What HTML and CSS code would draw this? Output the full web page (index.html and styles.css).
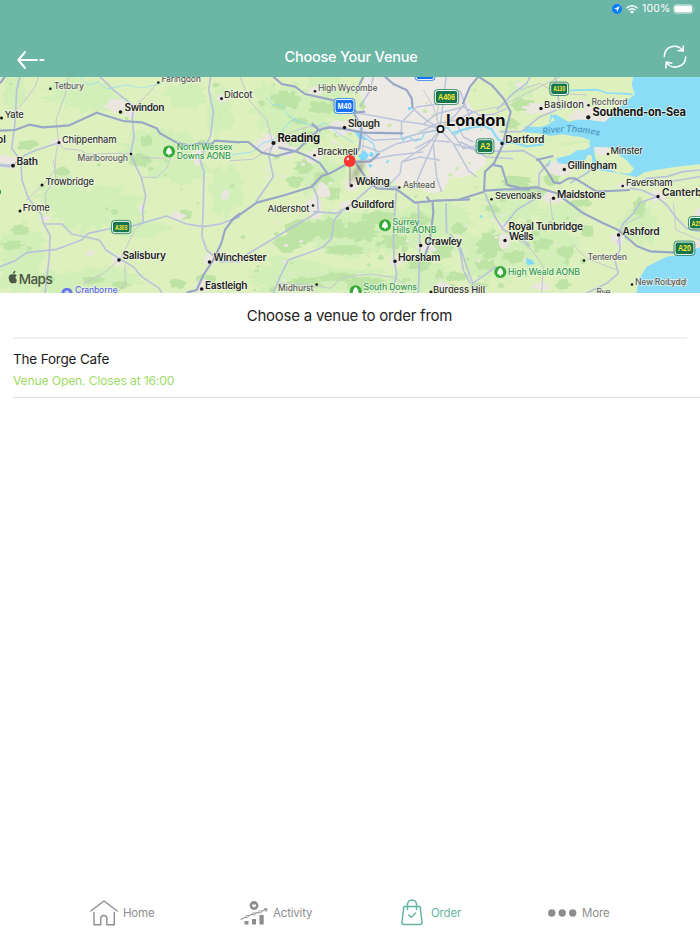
FILE: index.html
```html
<!DOCTYPE html>
<html lang="en">
<head>
<meta charset="utf-8">
<title>Choose Your Venue</title>
<link rel="stylesheet" href="styles.css">
</head>
<body>
<div class="app">
  <header class="header">
    <div class="status">
      <svg class="status-loc" viewBox="0 0 10 10"><circle cx="5" cy="5" r="5" fill="#087cff"/><path d="M7.8 2.2 2 4.8l2.7.5.5 2.7z" fill="#fff"/></svg>
      <svg class="status-wifi" viewBox="0 0 12 9"><g fill="none" stroke="#fff" stroke-width="1.5"><path d="M.6 3.2Q6-1.6 11.4 3.2M2.6 5.3Q6 2.3 9.4 5.3"/></g><path d="M4 6.7Q6 5 8 6.7L6 8.8z" fill="#fff"/></svg>
      <span class="status-text">100%</span>
      <svg class="status-batt" viewBox="0 0 22 10"><rect x=".5" y=".5" width="19.5" height="9" rx="2.8" fill="none" stroke="#fff" stroke-opacity=".5" stroke-width=".8"/><rect x="1.4" y="1.5" width="17.6" height="7" rx="1.8" fill="#fff"/><path d="M20.8 3.5q1.2 1.5 0 3z" fill="#fff" opacity=".5"/></svg>
    </div>
    <div class="nav">
      <svg class="back" viewBox="0 0 28 18"><path d="M8 1 1.3 9 8 17M1.3 9H20M23.3 9h3.2" fill="none" stroke="#fff" stroke-width="2" stroke-linecap="round" stroke-linejoin="round"/></svg>
      <h1 class="title">Choose Your Venue</h1>
      <svg class="refresh" viewBox="0 0 24 24"><g fill="none" stroke="#fff" stroke-width="1.5" stroke-linecap="round" stroke-linejoin="round"><path d="M1.300 11.500C1.500 1.500 13.500-2.500 20 5.700M20.300.9v5.200l-5.300-.6M22.700 12c-.2 9.800-13 13.800-19.200 5.600M2.800 23l.5-6 5.500 1.200"/></g></svg>
    </div>
  </header>

  <svg class="map" viewBox="0 77 700 216">
    <defs>
      <g id="tree"><circle r="6" fill="#34a936"/><path d="M0-4.200C2.600-2.500 3.800 2 2.200 2.500H.6v1.400H-.6V2.500h-1.600C-3.800 2-2.600-2.500 0-4.200z" fill="#fff"/></g>
      <filter id="soft" x="-50%" y="-50%" width="200%" height="200%"><feGaussianBlur stdDeviation="2.500"/></filter>
    </defs>
    <rect y="77" width="700" height="216" fill="#dff0bf"/>
    <g id="meadow" fill="#d2eeb9"></g>
    <g id="wood" fill="#bde3a5"></g>
    <g id="town" fill="#ebe7e0"></g>

    <!-- London -->
    <g transform="translate(340 77) scale(.33333)">
      <path d="M50 110 80 90 60 50 75 0H405L380 70 400 100 440 112 480 130 475 160 495 190 470 215 430 225 440 260 400 290 370 300 330 300 310 340 280 350 250 340 230 310 180 330 150 310 90 290 60 240 62 200 40 160z" fill="#edeae5"/>
    </g>
    <g id="park" fill="#cbe9b0"></g>

    <!-- Thames estuary and south coast -->
    <g transform="translate(530 77) scale(.33333)">
      <path d="M310 0 305 25 315 52 285 75 270 90 240 120 225 135 170 128 140 128 115 135 100 125 75 112 65 118 75 130 50 145 30 150 -15 148 -20 165 38 170 60 177 100 172 130 178 155 180 178 190 180 210 165 218 140 220 120 235 95 240 78 245 85 258 110 262 140 255 165 250 172 235 185 235 188 262 210 280 260 288 320 300 345 285 400 275 450 268 510 262V0z" fill="#8bdcf7"/>
      <path d="M192 210 240 212 262 232 290 250 312 275 300 290 262 288 235 275 205 260 195 240z" fill="#dff0bf"/>
      <path d="M192 210 235 212 240 228 222 236 200 232z" fill="#ebe8e1"/>
      <path d="M120 40 200 38 230 48 280 50 308 52M172 262 180 280 168 290M60 250 55 268M65 112 60 135" fill="none" stroke="#8bdcf7" stroke-width="5"/>
      <path d="M90 203 180 192M-10 186 40 190 70 184" fill="none" stroke="#d2eeb9" stroke-width="7"/>
    </g>
    <path d="M700 246.700l-13.300 6.600-20 3.400-20 10-8.400 13.300-1.600 13H700z" fill="#8bdcf7"/>
    <path d="M700 240v7l-13 5-4-2 8-6z" fill="#ebe7e0"/>
    <g fill="none" stroke="#8bdcf7" stroke-linejoin="round">
      <g transform="translate(340 77) scale(.33333)">
        <path d="M45 122 60 150 62 172 100 200 112 240M180 165 188 190 205 178 225 192 245 186 255 166 285 162 300 153 325 153 342 176 360 162" stroke-width="4"/>
        <path d="M340 168 362 160 400 150 430 147 455 157 472 184 490 200 520 196 560 208 610 202" stroke-width="7"/>
      </g>
      <path d="M230 155l22-3 11-9 12-4 10-12 8-8 22 8 10-4 13 10 16 10" stroke-width="1" opacity=".8"/>
      <path d="M80 77l8 8 10-3 9 7 20-4 15 3 20-5M266 97l6 7 11 2 4 8 13 9" stroke-width=".9" opacity=".7"/>
    </g>
    <g fill="#7fdaf8"><path d="M354 131l7 2 6 7-8-1zM358 156l6-6 5 5-3 5-5 0zM370 152l4 1-1 4-4-1zM368 164l5 1-3 3zM386 161l4-1-3 4zM408 107h3v3h-3zM480 215l3 1-2 3zM526 258l6 2 3 4-8 1z"/></g>

    <!-- Minor roads -->
    <g fill="none" stroke="#c6c7cf" stroke-width="3" stroke-linejoin="round">
      <g transform="translate(0 70) scale(.33333)">
        <path d="M116 20 106 50 70 98 48 118M205 20 195 75 168 150 176 217 168 250 165 300 130 345 76 392M473 38 436 80 400 112M178 220 190 236 240 240 260 252 392 250M427 322H470L500 295 512 262M375 585 376 640 350 670M430 458 405 478 382 525 360 568 310 610 250 640M424 264H500M160 270 168 325 135 372 140 430"/>
      </g>
      <g transform="translate(230 70) scale(.33333)">
        <path d="M30 20 60 95 110 150 128 218M125 222 190 184 235 170 345 172M0 272 70 268 125 230M140 640 240 645 300 655 340 622 420 612 490 622 540 650M405 180 395 250M630 60 620 150M580 60 610 110 632 178"/>
      </g>
      <g transform="translate(460 70) scale(.33333)">
        <path d="M0 165 40 125 120 110 200 70 300 20M270 386 278 450 240 480M640 400 648 480 720 510M340 525 380 565 470 600M175 510 215 540 250 590 245 670M180 60 240 40 290 70 380 75M540 440 500 460 470 520"/>
      </g>
    </g>

    <!-- A roads -->
    <g fill="none" stroke="#b8c3da" stroke-width="5" stroke-linejoin="round">
      <g transform="translate(0 70) scale(.33333)">
        <path d="M300 20 340 60 385 95 400 108 397 150 402 200 392 250 408 290 424 322 437 378 428 420 430 460M60 20 50 60 45 160 35 235 62 272 66 330 85 385 125 435 130 460 150 495 148 560 135 670M0 283 38 287 75 255 110 240 178 218M130 462H186L215 492 298 510 318 540 358 566 400 590 425 620 478 655 486 672M0 590 45 572 80 548 170 538 245 510 265 490 340 474 400 467 500 438 560 462 610 470 660 462 720 440M632 20 626 60 640 125 632 195 600 270 612 305 610 400 606 500 620 540 660 575H720M0 288 30 290"/>
      </g>
      <g transform="translate(230 70) scale(.33333)">
        <path d="M130 222 116 255 130 320 78 395M245 340 262 380 265 425 140 500 40 560M250 425 320 430 353 412 430 345 505 352M335 425 312 450 305 505 280 530 245 545 175 570 150 620 130 670M500 355 490 480 492 570 500 610 488 670M565 400 570 530 565 670M648 400 650 490M660 490 690 540 700 600 720 640"/>
      </g>
      <g transform="translate(340 77) scale(.33333)" stroke="#bcc5db" stroke-width="4.500">
        <path d="M50 107 185 132 250 142 300 155M185 132 184 168M60 160 100 190 180 185 230 172 300 157M65 205 120 225 170 200 240 185M300 160 260 205 185 255 180 290 150 320M300 160 280 200 240 290 225 330M280 200 290 300 305 345M300 157 340 200 395 215 440 240 520 245M310 150 350 110 375 80M300 150 308 90 318 0M215 92 260 130 300 155M190 130 230 90 300 80M250 142 290 110 370 90 420 115 460 112 500 95M240 165 290 140 345 130 400 105M340 200 385 280 410 300M335 165 370 215 440 200M225 215 270 190 330 195M185 255 240 240 300 250M80 250 160 235 250 225M100 0 90 40 60 90M345 130 370 180 400 195M360 40 385 110 390 150"/>
      </g>
      <g transform="translate(460 70) scale(.33333)">
        <path d="M0 215 50 240 125 245 190 242 235 268M120 185 185 185 240 140 290 120M110 120 160 70 200 40 210 20M285 20 290 45 300 120M75 370 105 440 130 480 180 500 210 530M130 470 170 420 235 380 238 310 265 280M330 340 380 310 410 280M475 495 490 460 520 430 540 398 590 380 620 405 650 445 680 475 720 485M590 380 545 360 510 355M520 350 560 325 620 320 670 305 720 300M560 345 660 330 720 320M478 500 480 540 465 570 475 610 440 640 380 670M0 530 20 590 38 640 110 590M38 640 40 670"/>
      </g>
    </g>

    <!-- Motorways -->
    <g fill="none" stroke="#99a7c7" stroke-width="6.500" stroke-linejoin="round">
      <g transform="translate(0 70) scale(.33333)">
        <path d="M0 182 45 180 88 164 130 172 208 166 290 128 370 153 425 157 470 175 480 190 530 218 565 226 600 220 635 222 645 212 720 217M0 40 15 20M720 430 700 446 675 480 664 520 640 570 610 615 590 660 560 668"/>
      </g>
      <g transform="translate(230 70) scale(.33333)">
        <path d="M0 216H55L95 248 140 258 200 242 265 180 300 172 350 178 400 188 520 190M130 20 155 42 195 50 225 72 325 94 380 125M372 130 395 175 388 235 360 275M145 232 200 245 240 262 270 280 292 310M0 455 80 398 165 375 245 350 275 318 300 310 345 285 365 275M245 160 272 185M365 275 420 275 448 250M375 275 405 320 440 355 500 358 555 398 620 392 720 388M608 395 610 430 598 520 580 570M590 380 600 395M400 20 385 50 378 70M465 20 490 42 530 60 545 85 548 115M375 128 405 125"/>
      </g>
      <g transform="translate(460 70) scale(.33333)">
        <path d="M8 102 30 50 55 20 95 45 130 85 152 125 140 175 128 225 102 280 75 305 72 365 0 388M95 284 125 290 142 345 185 355 230 352 290 370 370 430 430 460 475 480 530 528 570 544 650 548M75 362 135 358 210 358M228 270 280 258M235 268 262 305 282 338 300 340 325 325 345 325 410 365 510 360"/>
      </g>
    </g>

    <!-- Place dots -->
    <g class="dots">
      <circle cx="50.300" cy="88.700" r="1.300"/><circle cx="158.300" cy="82.500" r="1.300"/><circle cx="221.500" cy="98.500" r="1.500"/><circle cx="120.500" cy="112" r="1.800"/><circle cx="1.500" cy="118" r="1.500"/><circle cx="59" cy="142.500" r="1.500"/><circle cx="131" cy="154" r="1.300"/><circle cx="13" cy="165.700" r="1.900"/><circle cx="42" cy="185" r="1.500"/><circle cx="20" cy="211" r="1.500"/><circle cx="119" cy="260" r="1.800"/><circle cx="209.500" cy="262" r="1.800"/><circle cx="201.700" cy="289" r="1.800"/>
      <circle cx="315" cy="91.300" r="1.300"/><circle cx="344.500" cy="127.500" r="1.700"/><circle cx="273.500" cy="143" r="2.100"/><circle cx="314.500" cy="155.300" r="1.300"/><circle cx="351.300" cy="185.500" r="1.700"/><circle cx="399.300" cy="187.500" r="1.300"/><circle cx="313" cy="205.500" r="1.300"/><circle cx="347.500" cy="208.500" r="1.700"/><circle cx="420.700" cy="245.500" r="1.700"/><circle cx="395" cy="261.300" r="1.700"/><circle cx="316.700" cy="284.500" r="1.300"/><circle cx="431" cy="292" r="1.500"/>
      <circle cx="541" cy="108.500" r="1.700"/><circle cx="588.500" cy="105.300" r="1.300"/><circle cx="588.300" cy="117.300" r="2.100"/><circle cx="502" cy="143.500" r="1.700"/><circle cx="608" cy="154" r="1.300"/><circle cx="564.300" cy="169.500" r="1.700"/><circle cx="622.700" cy="186" r="1.300"/><circle cx="658" cy="196.500" r="1.700"/><circle cx="491.500" cy="199.300" r="1.300"/><circle cx="553.500" cy="198.300" r="1.700"/><circle cx="505" cy="240.500" r="1.700"/><circle cx="618.500" cy="235" r="1.700"/><circle cx="584" cy="260.500" r="1.300"/><circle cx="632" cy="284.500" r="1.300"/>
      <circle cx="440.500" cy="129" r="3.100" fill="#fff" stroke="#111" stroke-width="1.700"/>
    </g>

    <!-- Place names -->
    <g class="labels">
      <g class="small">
        <text x="54" y="89" textLength="30">Tetbury</text><text x="161.500" y="82.300" textLength="39.500">Faringdon</text><text x="77.500" y="160.800" textLength="50.500">Marlborough</text>
        <text x="318" y="91.200" textLength="59.500">High Wycombe</text><text x="403" y="187.500" textLength="32">Ashtead</text><text x="278" y="291" textLength="35.500">Midhurst</text>
        <text x="591.500" y="105" textLength="36">Rochford</text><text x="587.500" y="260" textLength="39.500">Tenterden</text><text x="635" y="284.500" textLength="52">New Romney</text><text x="667" y="285" textLength="19">Lydd</text><text x="596.500" y="295" textLength="14">Rye</text>
      </g>
      <g class="mid">
        <text x="4.800" y="117.800" textLength="19">Yate</text><text x="62" y="142.500" textLength="54.500">Chippenham</text><text x="45.500" y="185" textLength="48.500">Trowbridge</text><text x="22.800" y="211" textLength="27">Frome</text><text x="224" y="97.800" textLength="28.500">Didcot</text>
        <text x="317.500" y="155" textLength="40">Bracknell</text><text x="267.500" y="212" textLength="42">Aldershot</text><text x="433" y="293" textLength="52">Burgess Hill</text>
        <text x="544" y="107.500" textLength="40">Basildon</text><text x="610.500" y="153.500" textLength="32.500">Minster</text><text x="626" y="185.500" textLength="46.500">Faversham</text><text x="495" y="199" textLength="46.500">Sevenoaks</text>
      </g>
      <g class="big">
        <text x="124.500" y="111" textLength="40">Swindon</text><text x="16.500" y="165" textLength="21.500">Bath</text><text x="122.500" y="259" textLength="43.500">Salisbury</text><text x="213.500" y="261.300" textLength="53">Winchester</text><text x="205" y="288.500" textLength="42.500">Eastleigh</text><text x="-3" y="142.500">ol</text>
        <text x="348" y="127" textLength="32">Slough</text><text x="355.300" y="185" textLength="34.500">Woking</text><text x="351" y="208" textLength="43">Guildford</text><text x="424.500" y="244.800" textLength="37.500">Crawley</text><text x="398" y="260.500" textLength="42.500">Horsham</text>
        <text x="505.300" y="143" textLength="39">Dartford</text><text x="567.500" y="169" textLength="49.500">Gillingham</text><text x="557" y="198" textLength="48.500">Maidstone</text><text x="662" y="196">Canterbury</text><text x="508.500" y="229.700" textLength="74.500">Royal Tunbridge</text><text x="509" y="240" textLength="24.500">Wells</text><text x="622.500" y="234.700" textLength="37">Ashford</text>
      </g>
      <text class="city" x="277.500" y="142.300" textLength="42.500">Reading</text>
      <text class="city" x="592.500" y="115.700" textLength="93.500">Southend-on-Sea</text>
      <text class="capital" x="446" y="126" textLength="59.500">London</text>
      <g class="nature">
        <text x="176.700" y="150.300" textLength="56">North Wessex</text><text x="176.700" y="159" textLength="54">Downs AONB</text>
        <text x="392.500" y="224.500" textLength="27">Surrey</text><text x="392.500" y="233.300" textLength="44">Hills AONB</text>
        <text x="363.500" y="290" textLength="53.500">South Downs</text><text x="363.500" y="299" textLength="54">National Park</text><text x="508" y="275.300" textLength="72">High Weald AONB</text>
      </g>
      <text class="cranborne" x="75" y="292.500" textLength="42.500">Cranborne</text>
      <path id="river" d="M543 134.500Q575 128 602 137" fill="none"/>
      <text class="river"><textPath href="#river" textLength="57">River Thames</textPath></text>
    </g>
    <use href="#tree" x="169" y="151.500"/><use href="#tree" x="385" y="225.300"/><use href="#tree" x="355.700" y="291.200"/><use href="#tree" x="500.300" y="272"/>
    <circle cx="67" cy="293.500" r="5.700" fill="#6676eb"/><path d="M64 292.500l3-2 3 2z" fill="#fff"/>
    <path d="M0 190v4" stroke="#34a936" stroke-width="2"/>

    <!-- Road shields -->
    <g class="shields">
      <g fill="#16764f" stroke="#fff" stroke-width="1"><rect x="435.300" y="90.500" width="22.500" height="13" rx="2.500"/><rect x="477" y="139.700" width="16" height="13" rx="2.500"/><rect x="550.700" y="83" width="17" height="11.500" rx="2.500"/><rect x="112.500" y="221.300" width="17.500" height="11.500" rx="2.500"/><rect x="675" y="242" width="19" height="12.500" rx="2.500"/><rect x="689.500" y="217.500" width="18" height="11.500" rx="2.500"/></g>
      <g fill="none" stroke="#16764f" stroke-width=".8"><rect x="434.400" y="89.600" width="24.300" height="14.800" rx="3"/><rect x="476.100" y="138.800" width="17.800" height="14.800" rx="3"/><rect x="549.800" y="82.100" width="18.800" height="13.300" rx="3"/><rect x="111.600" y="220.400" width="19.300" height="13.300" rx="3"/><rect x="674.100" y="241.100" width="20.800" height="14.300" rx="3"/><rect x="688.600" y="216.600" width="20" height="13.300" rx="3"/></g>
      <g fill="#1671f2" stroke="#fff" stroke-width="1"><rect x="335" y="99.500" width="19" height="13" rx="2.500"/><rect x="416" y="66" width="18" height="13.500" rx="2.500"/></g>
      <g fill="none" stroke="#1671f2" stroke-width=".8"><rect x="334.100" y="98.600" width="20.800" height="14.800" rx="3"/><rect x="415.100" y="66" width="19.800" height="14.400" rx="3"/></g>
      <g class="shield-text"><text x="446.500" y="100.200" textLength="17" lengthAdjust="spacingAndGlyphs">A406</text><text x="485" y="149.300" textLength="10" lengthAdjust="spacingAndGlyphs">A2</text><text class="tiny" x="559.200" y="91.400" textLength="12" lengthAdjust="spacingAndGlyphs">A130</text><text class="tiny" x="121.200" y="229.700" textLength="12.500" lengthAdjust="spacingAndGlyphs">A303</text><text x="684.500" y="251.300" textLength="13" lengthAdjust="spacingAndGlyphs">A20</text><text class="tiny" x="698" y="225.700" textLength="13" lengthAdjust="spacingAndGlyphs">A259</text><text class="white" x="344.500" y="109.200" textLength="14" lengthAdjust="spacingAndGlyphs">M40</text></g>
    </g>

    <!-- Venue pin -->
    <path d="M352 183 365 164l-5-3-8 14z" fill="#555" opacity=".45" filter="url(#soft)"/>
    <path d="M350 165v20" stroke="#a9a2a0" stroke-width="1.500"/>
    <circle cx="349.700" cy="161" r="5.900" fill="#fb3530"/><circle cx="347.900" cy="158.900" r="1.300" fill="#fff" opacity=".85"/>

    <!-- Map attribution -->
    <g fill="#4c5844"><path d="M16.800 276.300c-1.500-.9-1.700-3 0-4.100-1-1.300-2.200-1-3.300-.6-1.200-.5-3.700-.3-4 2.500-.3 3 1.800 5.900 3.200 5.500l1-.4 1.200.4c1.100.1 1.900-1.800 1.900-3.300zM13.300 271c-.1-1.300.8-2.600 2.200-2.800.2 1.300-.8 2.700-2.200 2.800z" transform="translate(-1.700 -24.200) scale(1.100)"/><text class="brand" x="18.700" y="283.700" textLength="34">Maps</text></g>
  </svg>

  <main class="content">
    <h2 class="prompt">Choose a venue to order from</h2>
    <div class="venue">
      <div class="venue-name">The Forge Cafe</div>
      <div class="venue-state">Venue Open. Closes at 16:00</div>
    </div>
  </main>

  <nav class="tabs">
    <div class="tab home"><svg width="28" height="26" viewBox="0 0 28 26"><path d="M.8 11 14 1l13.200 10M4 12.500v12.300h6.800v-6.300q0-3 3-3t3 3v6.300h7.500V12.500" fill="none" stroke="#8d8d8d" stroke-width="1.400" stroke-linecap="round" stroke-linejoin="round"/></svg><span class="tab-label">Home</span></div>
    <div class="tab activity"><svg width="28" height="24" viewBox="0 0 28 24"><g fill="#8d8d8d"><path d="M4.500 20h4v3.600h-4zM12 18h4v5.600h-4zM19.500 14h4.200v9.600h-4.200z"/><circle cx="14" cy="4.500" r="4.400"/></g><path d="M14 6.800 11.900 4.700q-.1-1.500 1.100-1.400l1 .7 1-.7q1.200-.1 1.100 1.400z" fill="#fff"/><path d="M.7 18.500 7 15.600l7-3 6.500-1.800L26.700 8m-2.900-.2 3.200.1-1.300 2.900" fill="none" stroke="#8d8d8d" stroke-width="1.100"/><g fill="#fff" stroke="#8d8d8d" stroke-width=".8"><circle cx="7" cy="15.600" r="1.200"/><circle cx="14" cy="12.900" r="1.200"/><circle cx="20.500" cy="10.800" r="1.200"/></g></svg><span class="tab-label">Activity</span></div>
    <div class="tab order"><svg width="22" height="27" viewBox="0 0 22 27"><path d="M2.900 7.500h16.200L21 23q0 2.600-2.500 2.600h-15Q.8 25.600 1 23zM6.500 10.500V5.300q.3-4 4.500-4.300 4.300.3 4.500 4.300v5.200M7.800 16l2.500 2.300L14.600 14" fill="none" stroke="#64b6a2" stroke-width="1.500" stroke-linecap="round" stroke-linejoin="round"/></svg><span class="tab-label">Order</span></div>
    <div class="tab more"><svg width="29" height="8" viewBox="0 0 29 8"><g fill="#8d8d8d"><circle cx="3.800" cy="4" r="3.700"/><circle cx="14.200" cy="4" r="3.700"/><circle cx="24.700" cy="4" r="3.700"/></g></svg><span class="tab-label">More</span></div>
  </nav>
</div>
<script src="map.js"></script>
</body>
</html>
```
FILE: styles.css
```css
* { box-sizing: border-box; }
body { margin: 0; background: #fff; font-family: Inter, "Liberation Sans", sans-serif; }
.app { width: 700px; height: 934px; display: flex; flex-direction: column; overflow: hidden; }
.header { height: 77px; background: #6cb6a6; color: #fff; flex: none; }
.status { height: 18px; padding: 0 6px 0 0; display: flex; align-items: center; justify-content: flex-end; }
.status-loc { width: 10px; height: 10px; margin-right: 4px; }
.status-wifi { width: 12px; height: 9px; margin-right: 4px; }
.status-text { font-size: 10.5px; line-height: 18px; width: 28px; white-space: nowrap; margin-right: 3px; letter-spacing: .15px; }
.status-batt { width: 22px; height: 10px; margin-right: -1px; }
.nav { height: 59px; padding: 0 13px 0 17px; display: grid; grid-template-columns: 28px 1fr 24px; align-items: center; }
.back { width: 28px; height: 18px; margin-top: 24px; }
.title { margin: 18px 6px 0 0; text-align: center; font-size: 14.500px; line-height: 20px; font-weight: 500; letter-spacing: -.23px; }
.refresh { width: 24px; height: 24px; margin-top: 19px; }
.map { display: block; width: 700px; height: 216px; flex: none; }
.dots { fill: #161616; }
.labels text { paint-order: stroke; stroke: #f7f8ee; stroke-opacity: .75; stroke-width: 1.500px; stroke-linejoin: round; }
.small { font-size: 8.700px; font-weight: 500; fill: #595b59; }
.mid { font-size: 9.400px; font-weight: 500; fill: #303330; }
.big { font-size: 10.200px; font-weight: 600; fill: #222422; }
.city { font-size: 11.200px; font-weight: 700; fill: #151515; }
.capital { font-size: 16.500px; font-weight: 700; fill: #0b0b0b; }
.nature { font-size: 8.700px; font-weight: 500; fill: #2f9a49; }
.cranborne { font-size: 8.700px; font-weight: 500; fill: #5967e0; }
.labels .river { font-size: 8.700px; font-style: italic; font-weight: 600; fill: #4f9cc5; stroke: none; }
.shield-text { font-family: "Liberation Sans", sans-serif; font-size: 8.800px; font-weight: 700; fill: #ffe735; text-anchor: middle; }
.tiny { font-size: 7px; }
.white { fill: #fff; }
.brand { font-size: 13.500px; font-weight: 500; }
.content { flex: 1; padding-left: 13px; }
.prompt { margin: 0 13px 0 0; height: 46px; padding-right: 1px; border-bottom: 2px solid #f2f2f2; font-size: 15px; line-height: 45px; font-weight: 400; text-align: center; color: #222; letter-spacing: -.24px; }
.venue { height: 59px; border-bottom: 1px solid #dedede; padding-top: 10px; }
.venue-name { font-size: 13.500px; line-height: 20px; color: #1c1c1c; letter-spacing: -.18px; }
.venue-state { margin-top: 2px; font-size: 12.200px; line-height: 19px; color: #a0db69; letter-spacing: -.18px; }
.tabs { height: 43px; flex: none; display: grid; grid-template-columns: 240px 161px 147px 152px; color: #8d8d8d; font-size: 11.500px; letter-spacing: -.18px; }
.tab { display: flex; align-items: center; height: 43px; }
.home { padding-left: 90px; gap: 5px; }
.activity { gap: 5px; }
.order { gap: 8px; color: #64b6a2; }
.more { gap: 5px; }
.tab-label { line-height: 16px; padding-top: 1px; }
```
FILE: map.js
```js
// Irregular land-cover patches; each entry is [cx, cy, rx, ry].
let seed = 17;
const rand = () => (seed = (seed * 16807) % 2147483647) / 2147483647;
function patches(id, list) {
  document.getElementById(id).innerHTML = list.map(([cx, cy, rx, ry]) => {
    const n = Math.max(9, Math.round((rx + ry) * 0.9));
    const pts = Array.from({ length: n }, (_, i) => {
      const a = (i / n) * Math.PI * 2, r = 0.65 + rand() * 0.55;
      return (cx + Math.cos(a) * rx * r).toFixed(1) + "," + (cy + Math.sin(a) * ry * r).toFixed(1);
    });
    return `<polygon points="${pts.join(" ")}"/>`;
  }).join("");
}
function scatter(n, x0, x1, y0, y1, size) {
  return Array.from({ length: n }, () => {
    const s = size * (0.4 + rand());
    return [x0 + rand() * (x1 - x0), y0 + rand() * (y1 - y0), s * 1.3, s];
  });
}
patches("meadow", [
  [85, 95, 42, 17], [15, 92, 14, 18], [95, 208, 50, 24], [60, 195, 25, 20], [22, 245, 24, 22],
  [20, 272, 26, 20], [165, 150, 44, 20], [187, 96, 22, 14], [180, 170, 30, 14], [60, 283, 36, 12],
  [105, 278, 40, 13], [225, 190, 18, 26], [280, 108, 30, 27], [325, 100, 30, 24], [300, 130, 30, 18],
  [350, 232, 50, 26], [390, 230, 48, 24], [290, 275, 42, 20], [350, 280, 50, 13], [440, 220, 34, 20],
  [420, 278, 40, 16], [490, 255, 38, 28], [545, 250, 36, 22], [510, 205, 32, 18], [560, 215, 24, 13],
  [220, 112, 14, 26], [140, 230, 28, 10], [320, 175, 26, 22], [640, 225, 20, 20], [520, 90, 16, 10]
]);
patches("wood", [
  [62, 171, 8, 5], [27, 145, 11, 5], [80, 139, 6, 4], [141, 160, 11, 7], [146, 141, 6, 6],
  [20, 230, 9, 6], [12, 245, 12, 5], [47, 278, 10, 4], [92, 280, 12, 4], [121, 285, 10, 4],
  [186, 214, 8, 6], [205, 145, 8, 6], [285, 100, 14, 10], [322, 108, 14, 7], [300, 121, 9, 4],
  [340, 103, 9, 5], [390, 87, 7, 7], [366, 106, 6, 7], [304, 166, 11, 7], [295, 181, 9, 6],
  [321, 180, 10, 8], [333, 193, 9, 8], [300, 232, 16, 12], [288, 244, 13, 8], [327, 229, 20, 12],
  [360, 232, 21, 10], [379, 217, 18, 7], [394, 241, 14, 8], [345, 250, 22, 6], [305, 283, 18, 7],
  [338, 277, 19, 5], [367, 284, 21, 7], [416, 221, 15, 7], [419, 264, 12, 7], [441, 250, 12, 9],
  [459, 229, 9, 6], [490, 245, 15, 12], [485, 264, 12, 6], [515, 257, 12, 7], [543, 244, 10, 6],
  [566, 252, 9, 7], [516, 182, 16, 6], [532, 192, 15, 6], [550, 179, 10, 6], [492, 209, 8, 4],
  [580, 203, 12, 4], [639, 207, 7, 11], [522, 105, 15, 7], [512, 124, 8, 6], [588, 230, 8, 6],
  [456, 277, 12, 5], [478, 286, 10, 4], [563, 285, 9, 4], [206, 279, 9, 6], [178, 284, 9, 5],
  ...scatter(60, 250, 590, 190, 290, 2.5), ...scatter(30, 260, 390, 80, 190, 2.2),
  ...scatter(16, 0, 245, 80, 290, 2)
]);
patches("town", [
  [117, 105, 12, 8], [130, 114, 6, 4], [59, 142, 8, 4], [7, 163, 12, 7], [45, 219, 6, 3],
  [118, 260, 7, 5], [178, 216, 9, 4], [210, 260, 6, 7], [202, 286, 8, 6], [222, 98, 6, 5],
  [225, 195, 5, 6], [271, 144, 17, 10], [287, 151, 9, 7], [315, 156, 9, 7], [345, 128, 15, 8],
  [316, 91, 7, 5], [315, 206, 9, 11], [323, 191, 8, 8], [352, 185, 9, 6], [347, 207, 7, 6],
  [377, 177, 10, 6], [397, 261, 7, 5], [427, 247, 10, 5], [443, 286, 9, 4], [496, 145, 13, 7],
  [539, 108, 16, 6], [594, 116, 25, 9], [581, 103, 9, 4], [561, 168, 15, 8], [553, 197, 10, 6],
  [504, 240, 6, 9], [503, 226, 5, 4], [618, 238, 8, 7], [658, 196, 8, 6], [608, 155, 7, 5],
  [624, 186, 7, 3], [698, 216, 4, 8], [697, 245, 7, 5], [520, 85, 5, 4], [541, 286, 9, 4],
  [16, 113, 7, 4], [90, 253, 4, 3], [142, 209, 3, 4], [197, 157, 6, 8], [375, 100, 12, 14], [380, 130, 14, 10],
  ...scatter(50, 260, 580, 170, 290, 1.3), ...scatter(35, 260, 390, 80, 180, 1.6)
]);
patches("park", scatter(22, 375, 490, 86, 188, 1.5));
```
